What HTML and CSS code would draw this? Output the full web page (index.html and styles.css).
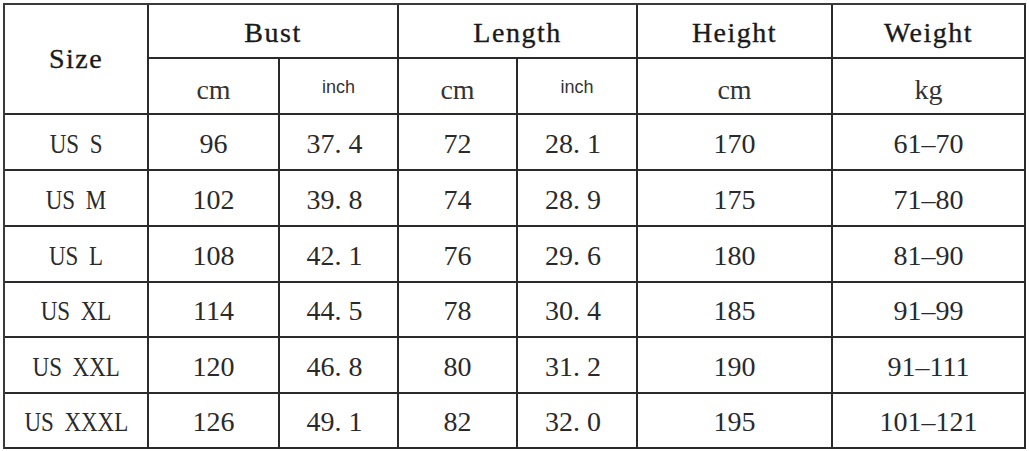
FILE: index.html
```html
<!DOCTYPE html>
<html lang="en">
<head>
<meta charset="utf-8">
<title>Size Chart</title>
<link rel="stylesheet" href="styles.css">
</head>
<body>
<div class="chart">
  <div class="cell head size-head">Size</div>
  <div class="cell head span2">Bust</div>
  <div class="cell head span2">Length</div>
  <div class="cell head">Height</div>
  <div class="cell head">Weight</div>

  <div class="cell unit">cm</div>
  <div class="cell unit-sans">inch</div>
  <div class="cell unit">cm</div>
  <div class="cell unit-sans">inch</div>
  <div class="cell unit">cm</div>
  <div class="cell unit">kg</div>

  <div class="cell label"><span>US S</span></div>
  <div class="cell">96</div><div class="cell dec">37. 4</div>
  <div class="cell">72</div><div class="cell dec">28. 1</div>
  <div class="cell">170</div><div class="cell">61–70</div>

  <div class="cell label"><span>US M</span></div>
  <div class="cell">102</div><div class="cell dec">39. 8</div>
  <div class="cell">74</div><div class="cell dec">28. 9</div>
  <div class="cell">175</div><div class="cell">71–80</div>

  <div class="cell label"><span>US L</span></div>
  <div class="cell">108</div><div class="cell dec">42. 1</div>
  <div class="cell">76</div><div class="cell dec">29. 6</div>
  <div class="cell">180</div><div class="cell">81–90</div>

  <div class="cell label"><span>US XL</span></div>
  <div class="cell">114</div><div class="cell dec">44. 5</div>
  <div class="cell">78</div><div class="cell dec">30. 4</div>
  <div class="cell">185</div><div class="cell">91–99</div>

  <div class="cell label"><span>US XXL</span></div>
  <div class="cell">120</div><div class="cell dec">46. 8</div>
  <div class="cell">80</div><div class="cell dec">31. 2</div>
  <div class="cell">190</div><div class="cell">91–111</div>

  <div class="cell label"><span>US XXXL</span></div>
  <div class="cell">126</div><div class="cell dec">49. 1</div>
  <div class="cell">82</div><div class="cell dec">32. 0</div>
  <div class="cell">195</div><div class="cell">101–121</div>
</div>
</body>
</html>
```
FILE: styles.css
```css
html, body {
  margin: 0;
  padding: 0;
  background: #ffffff;
}

body {
  padding: 3px 0 0 3px;
}

.chart {
  display: grid;
  grid-template-columns: 144px 131px 119px 119px 120px 195px 193px;
  grid-template-rows: 54px 56px 56px 56px 56px 55px 56px 55px;
  width: max-content;
  border-left: 2px solid #3a3a3a;
  border-top: 2px solid #3a3a3a;
  font-family: "Liberation Serif", "Times New Roman", serif;
  font-size: 28px;
  color: #2a2a2a;
}

.cell {
  display: flex;
  align-items: center;
  justify-content: center;
  border-right: 2px solid #2a2a2a;
  border-bottom: 2px solid #2a2a2a;
  padding-top: 3px;
  box-sizing: border-box;
  white-space: pre;
  line-height: 1;
}

.dec {
  padding-right: 8px;
}

.head {
  color: #1a1a1a;
  -webkit-text-stroke: 0.35px #1a1a1a;
  letter-spacing: 1.5px;
}

.size-head {
  grid-row: span 2;
  padding-top: 0;
}

.span2 {
  grid-column: span 2;
}

.unit {
  padding-top: 8px;
  color: #333333;
}

.unit-sans {
  font-family: "Liberation Sans", Arial, sans-serif;
  font-size: 18px;
  color: #333333;
  padding-top: 2px;
}

.label span {
  display: inline-block;
  word-spacing: 6px;
  transform: scaleX(0.82);
}
```
